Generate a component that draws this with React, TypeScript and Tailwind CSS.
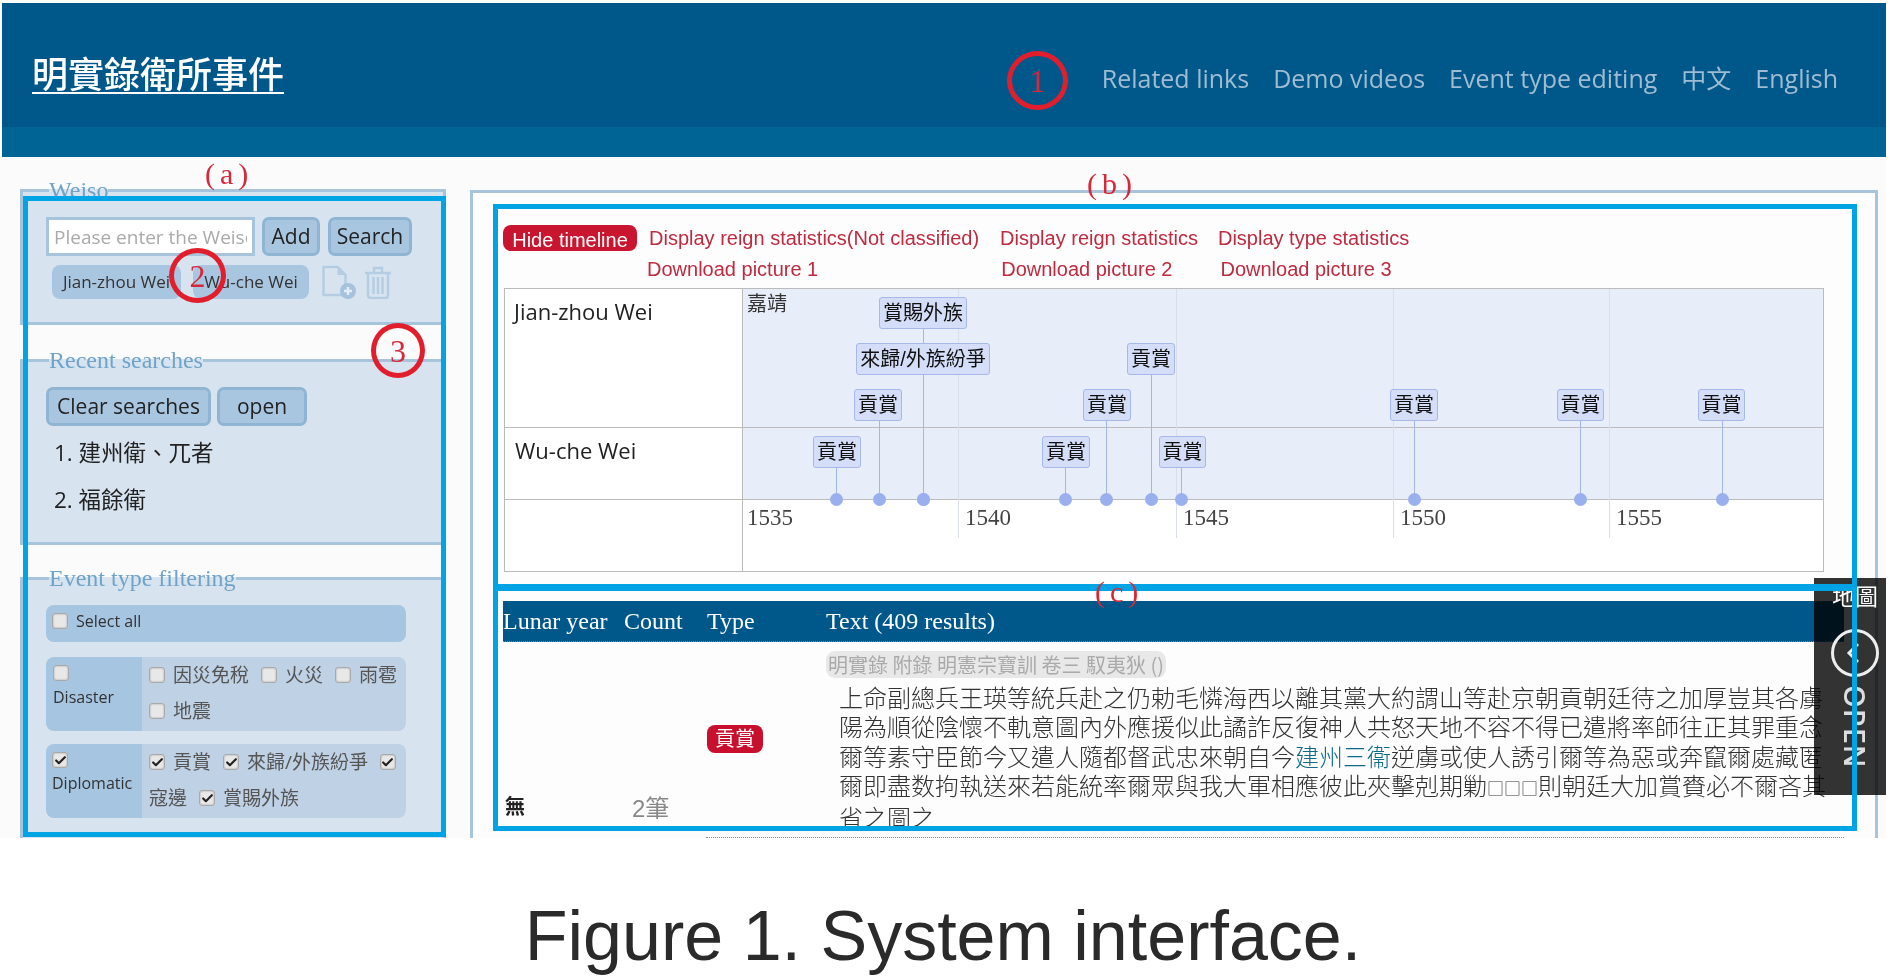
import React from 'react';
import { Check } from 'lucide-react';

const ui = "font-['Open_Sans','Noto_Sans_CJK_TC',sans-serif]";

// page x/y minus the origin of the timeline canvas (743, 289)
const EVENTS = [
  { label: '賞賜外族', left: 136, top: 8, width: 88, line: 180 },
  { label: '來歸/外族紛爭', left: 113, top: 54, width: 134, line: 180 },
  { label: '貢賞', left: 111, top: 100, width: 48, line: 136 },
  { label: '貢賞', left: 70, top: 147, width: 48, line: 93 },
  { label: '貢賞', left: 340, top: 100, width: 48, line: 363 },
  { label: '貢賞', left: 299, top: 147, width: 48, line: 322 },
  { label: '貢賞', left: 384, top: 54, width: 48, line: 408 },
  { label: '貢賞', left: 416, top: 147, width: 47, line: 438 },
  { label: '貢賞', left: 647, top: 100, width: 48, line: 671 },
  { label: '貢賞', left: 814, top: 100, width: 47, line: 837 },
  { label: '貢賞', left: 955, top: 100, width: 47, line: 979 },
];

const GRID = [
  { x: 215, year: '1540' },
  { x: 433, year: '1545' },
  { x: 650, year: '1550' },
  { x: 866, year: '1555' },
];

const Box = ({ checked = false }: { checked?: boolean }) => (
  <span className="flex w-4 h-4 shrink-0 items-center justify-center rounded-[3px] border border-[#a9a9a9] bg-[#e8e8e8] shadow-[inset_0_0_2px_#999]">
    {checked && <Check size={13} strokeWidth={4} color="#222" />}
  </span>
);

const Item = ({ text, checked }: { text: string; checked?: boolean }) => (
  <span className="flex items-center gap-2 text-[19px] text-[#555]">
    <Box checked={checked} />
    {text}
  </span>
);

const Btn = ({ children, className }: { children: React.ReactNode; className: string }) => (
  <button className={`h-[39px] rounded-[7px] border-[3px] border-[#8fb5d3] bg-[#a9c6e0] text-[21px] text-[#222] ${className}`}>
    {children}
  </button>
);

const Legend = ({ children }: { children: React.ReactNode }) => (
  <legend className="ml-[3px] h-6 font-['Liberation_Serif',serif] text-[24px] leading-6 text-[#6fa3c8]">{children}</legend>
);

const Circle = ({ n, className }: { n: string; className: string }) => (
  <div className={`absolute flex items-center justify-center rounded-[50%] border-[5px] border-[#e21e2d] font-['Liberation_Serif',serif] text-[32px] text-[#d9273a] ${className}`}>
    {n}
  </div>
);

const Mark = ({ text, className }: { text: string; className: string }) => (
  <div className={`absolute font-['Liberation_Serif',serif] text-[30px] leading-none tracking-[5px] text-[#d9273a] ${className}`}>{text}</div>
);

export default function App() {
  return (
    <div className={`relative h-[978px] w-[1886px] overflow-hidden bg-white ${ui}`}>
      {/* top bar */}
      <header className="ml-[2px] mt-[3px] flex h-[154px] flex-col">
        <div className="flex h-[124px] items-start justify-between bg-[#00588a] pl-[30px] pr-[48px]">
          <a className="mt-[50px] text-[36px] font-medium leading-[44px] text-white underline decoration-2 underline-offset-4">明實錄衛所事件</a>
          <nav className="mt-[57px] flex items-center gap-[24px] text-[25px] leading-9 text-[#9fbdd2]">
            <span>Related links</span>
            <span>Demo videos</span>
            <span>Event type editing</span>
            <span>中文</span>
            <span>English</span>
          </nav>
        </div>
        <div className="h-[30px] bg-[#006494]" />
      </header>

      <main className="flex h-[681px] bg-[#fbfbfc]">
        {/* sidebar */}
        <aside className="ml-[20px] flex w-[426px] flex-col pt-[21px]">
          <fieldset className="h-[147px] border-[3px] border-[#a6c4dc] bg-[#d7e4f0] pl-[23px]">
            <Legend>Weiso</Legend>
            <div className="mt-[15px] flex gap-[7px]">
              <input
                placeholder="Please enter the Weiso"
                className="h-[39px] w-[209px] border-[3px] border-[#a6c4dc] bg-white px-[5px] text-[19px] outline-none placeholder:text-[#aaa]"
              />
              <Btn className="w-[58px]">Add</Btn>
              <Btn className="ml-px w-[84px]">Search</Btn>
            </div>
            <div className="ml-[6px] mt-[9px] flex items-center">
              <span className="flex h-[34px] w-[129px] items-center justify-center rounded-[8px] bg-[#a9c6e0] text-[17px] text-[#333]">Jian-zhou Wei</span>
              <span className="ml-3 flex h-[34px] w-[116px] items-center justify-center rounded-[8px] bg-[#a9c6e0] text-[17px] text-[#333]">Wu-che Wei</span>
              <svg width="36" height="34" viewBox="0 0 36 34" fill="none" className="ml-[13px]">
                <path d="M1.5 2h14l8 8v20h-22z" stroke="#b5cde2" strokeWidth="2.5" strokeLinejoin="round" />
                <path d="M15.5 2l8 8h-8z" fill="#b5cde2" />
                <circle cx="26" cy="26" r="8" fill="#a5c2dc" />
                <path d="M22 26h8M26 22v8" stroke="#e4edf5" strokeWidth="2.5" />
              </svg>
              <svg width="28" height="33" viewBox="0 0 28 33" fill="none" stroke="#b5cde2" strokeWidth="2.5" className="ml-[6px]">
                <path d="M1 7h26M10 6V2h8v4" />
                <path d="M4 7v22c0 1.500 1 3 3 3h14c2 0 3-1.500 3-3V7" />
                <path d="M9.500 11v17M14 11v17M18.500 11v17" />
              </svg>
            </div>
          </fieldset>

          <fieldset className="mt-[23px] h-[197px] border-[3px] border-[#a6c4dc] bg-[#d7e4f0] pl-[23px]">
            <Legend>Recent searches</Legend>
            <div className="mt-[15px] flex gap-[6px]">
              <Btn className="w-[165px]">Clear searches</Btn>
              <Btn className="w-[90px]">open</Btn>
            </div>
            <ol className="ml-2 mt-[3px] text-[22.500px] leading-[47px] text-[#222]">
              <li>1. 建州衛、兀者</li>
              <li>2. 福餘衛</li>
            </ol>
          </fieldset>

          <fieldset className="mt-[21px] h-[272px] border-x-[3px] border-t-[3px] border-[#a6c4dc] bg-[#d7e4f0] pl-[23px]">
            <Legend>Event type filtering</Legend>
            <div className="mt-[15px] flex h-[37px] w-[360px] items-start gap-2 rounded-[8px] bg-[#a6c5e0] pl-[6px] pt-2 text-[16px] leading-4 text-[#333]">
              <Box />
              Select all
            </div>
            <div className="mt-[15px] flex h-[74px] w-[360px] overflow-hidden rounded-[8px]">
              <div className="w-[96px] bg-[#a6c5e0] pl-[7px] pt-2 text-[16px] text-[#333]">
                <Box />
                <div className="mt-1">Disaster</div>
              </div>
              <div className="flex-1 bg-[#bfd1e5] pl-[7px]">
                <div className="flex h-[36px] items-center gap-3">
                  <Item text="因災免稅" />
                  <Item text="火災" />
                  <Item text="雨雹" />
                </div>
                <div className="flex h-[36px] items-center">
                  <Item text="地震" />
                </div>
              </div>
            </div>
            <div className="mt-[13px] flex h-[74px] w-[360px] overflow-hidden rounded-[8px]">
              <div className="w-[96px] bg-[#a6c5e0] pl-[6px] pt-2 text-[16px] text-[#333]">
                <Box checked />
                <div className="mt-[3px]">Diplomatic</div>
              </div>
              <div className="flex-1 bg-[#bfd1e5] pl-[7px]">
                <div className="flex h-[36px] items-center gap-3">
                  <Item text="貢賞" checked />
                  <Item text="來歸/外族紛爭" checked />
                  <Box checked />
                </div>
                <div className="flex h-[36px] items-center gap-3 text-[19px] text-[#555]">
                  寇邊
                  <Item text="賞賜外族" checked />
                </div>
              </div>
            </div>
          </fieldset>
        </aside>

        {/* main panel */}
        <section className="ml-[24px] mt-[33px] h-[648px] w-[1408px] border-x-[3px] border-t-[3px] border-[#a6c4dc] bg-[#fdfdfe] pl-[30px] font-['Liberation_Sans','Noto_Sans_CJK_TC',sans-serif]">
          <div className="mt-[32px] flex h-[26px] items-center text-[20px] text-[#bf2a3f]">
            <button className="h-[26px] w-[134px] rounded-[8px] bg-[#c9152f] pb-[2px] text-[20px] text-white">Hide timeline</button>
            <span className="ml-[12px]">Display reign statistics(Not classified)</span>
            <span className="ml-[21px]">Display reign statistics</span>
            <span className="ml-[20px]">Display type statistics</span>
          </div>
          <div className="ml-[144px] mt-[5px] flex h-[26px] items-center text-[20px] text-[#bf2a3f]">
            <span>Download picture 1</span>
            <span className="ml-[183px]">Download picture 2</span>
            <span className="ml-[48px]">Download picture 3</span>
          </div>

          {/* timeline */}
          <div className="ml-px mt-[6px] flex h-[284px] w-[1320px] border border-[#bbb] bg-white">
            <div className="w-[238px] shrink-0 border-r border-[#bbb] text-[22px] font-['Open_Sans',sans-serif] text-[#222]">
              <div className="h-[139px] border-b border-[#bbb] pl-[9px] pt-[6px]">Jian-zhou Wei</div>
              <div className="h-[72px] border-b border-[#bbb] pl-[10px] pt-[6px]">Wu-che Wei</div>
            </div>
            <div className="relative flex-1">
              <div className="h-[139px] border-b border-[#bbb] bg-[#e8edfa] pl-1 text-[20px] leading-[30px] text-[#333]">嘉靖</div>
              <div className="h-[72px] border-b border-[#bbb] bg-[#e8edfa]" />
              {GRID.map((g) => (
                <div key={g.x} className="absolute top-0 h-[249px] w-px bg-[#d9dee9]" style={{ left: g.x }} />
              ))}
              <div className="absolute left-1 top-[212px] font-['Liberation_Serif',serif] text-[23px] text-[#444]">1535</div>
              {GRID.map((g) => (
                <div key={g.year} className="absolute top-[212px] font-['Liberation_Serif',serif] text-[23px] text-[#444]" style={{ left: g.x + 7 }}>
                  {g.year}
                </div>
              ))}
              {EVENTS.map((e, i) => (
                <React.Fragment key={i}>
                  <div className="absolute w-px bg-[#a2b6e8]" style={{ left: e.line, top: e.top + 20, height: 210 - e.top - 20 }} />
                  <div
                    className="absolute flex h-8 items-center justify-center rounded-[3px] border border-[#a5b8e8] bg-[#d5def8] text-[20px] text-[#111]"
                    style={{ left: e.left, top: e.top, width: e.width }}
                  >
                    {e.label}
                  </div>
                  <div className="absolute h-[13px] w-[13px] rounded-full bg-[#9ab0ee]" style={{ left: e.line - 6, top: 204 }} />
                </React.Fragment>
              ))}
            </div>
          </div>

          {/* results */}
          <div className="mt-[29px] w-[1341px]">
            <div className="grid h-[41px] grid-cols-[121px_83px_119px_1fr] items-center border-b border-dotted border-[#888] bg-[#00588a] font-['Liberation_Serif',serif] text-[24px] text-white">
              <span>Lunar year</span>
              <span>Count</span>
              <span>Type</span>
              <span>Text (409 results)</span>
            </div>
            <div className="grid h-[195px] grid-cols-[121px_83px_119px_1fr]">
              <div className="flex items-end pb-[15px] pl-[2px] text-[20px] font-bold text-[#222]">無</div>
              <div className="flex items-end pb-[10px] pl-[8px] text-[24px] text-[#888]">2筆</div>
              <div className="flex items-center pb-[2px]">
                <span className="flex h-[28px] w-[56px] items-center justify-center rounded-[8px] bg-[#c8102e] text-[20px] text-white">貢賞</span>
              </div>
              <div className="font-['Noto_Sans_CJK_TC',sans-serif]">
                <div className="mt-[9px] flex h-[27px] w-[340px] items-center whitespace-nowrap rounded-[9px] bg-[#e8e8e8] pl-[2px] text-[20px] text-[#aaa]">明實錄 附錄 明憲宗寶訓 卷三 馭夷狄 ()</div>
                <div className="ml-[13px] mt-[4px] whitespace-nowrap text-[24px] font-light leading-[29.300px] text-[#333]">
                  <div>上命副總兵王瑛等統兵赴之仍勅毛憐海西以離其黨大約謂山等赴京朝貢朝廷待之加厚豈其各虜</div>
                  <div>陽為順從陰懷不軌意圖內外應援似此譎詐反復神人共怒天地不容不得已遣將率師往正其罪重念</div>
                  <div>
                    爾等素守臣節今又遣人隨都督武忠來朝自今<span className="text-[#0f6a8a]">建州三衞</span>逆虜或使人誘引爾等為惡或奔竄爾處藏匿
                  </div>
                  <div>
                    爾即盡数拘執送來若能統率爾眾與我大軍相應彼此夾擊剋期勦<span className="text-[17px]">□□□</span>則朝廷大加賞賚必不爾吝其
                  </div>
                  <div>省之圖之</div>
                </div>
              </div>
            </div>
            <div className="ml-[203px] border-t border-dotted border-[#888]" />
          </div>
        </section>
      </main>

      {/* map drawer, multiplied over the page */}
      <div className="absolute left-[1814px] top-[578px] h-[217px] w-[72px] bg-[#333] mix-blend-multiply" />
      <div className="absolute left-[1814px] top-[578px] flex h-[217px] w-[72px] flex-col items-center pl-[10px] text-white">
        <span className="mt-[4px] text-[23px] leading-7">地圖</span>
        <svg width="48" height="48" viewBox="0 0 48 48" fill="none" stroke="#eee" strokeWidth="3" className="mt-[19px]">
          <circle cx="24" cy="24" r="22.500" />
          <path d="M27 15l-9 9 9 9" />
        </svg>
        <span className="mt-[8px] text-[29px] font-semibold leading-none tracking-[1px] text-[#ddd] [writing-mode:vertical-rl]">OPEN</span>
      </div>

      {/* annotations drawn over the screenshot */}
      <div className="absolute left-[23px] top-[196px] h-[641px] w-[423px] border-[5px] border-[#00a4e4]" />
      <div className="absolute left-[493px] top-[204px] h-[387px] w-[1364px] border-[5px] border-[#00a4e4]" />
      <div className="absolute left-[493px] top-[584px] h-[247px] w-[1364px] border-x-[5px] border-b-[5px] border-t-[7px] border-[#00a4e4]" />
      <Mark text="(a)" className="left-[205px] top-[159px]" />
      <Mark text="(b)" className="left-[1087px] top-[169px]" />
      <Mark text="(c)" className="left-[1095px] top-[577px]" />
      <Circle n="1" className="left-[1007px] top-[51px] h-[59px] w-[61px]" />
      <Circle n="2" className="left-[169px] top-[248px] h-[55px] w-[57px]" />
      <Circle n="3" className="left-[371px] top-[323px] h-[55px] w-[54px]" />

      <p className="mt-[60px] text-center font-['Liberation_Sans',sans-serif] text-[70px] leading-[77px] text-[#2a2a2a]">Figure 1. System interface.</p>
    </div>
  );
}
